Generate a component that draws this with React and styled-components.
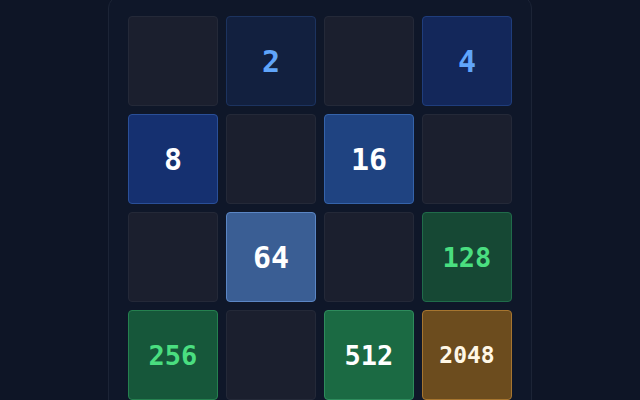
import React from 'react';
import styled, { createGlobalStyle } from 'styled-components';

const GlobalStyle = createGlobalStyle`
  * {
    margin: 0;
    padding: 0;
    box-sizing: border-box;
  }

  html, body {
    width: 100%;
    height: 100%;
    overflow: hidden;
    background-color: #0e1526;
    font-family: 'DejaVu Sans Mono', 'Liberation Mono', monospace;
  }
`;

// cores de cada peça (fundo, borda, texto)
const tileColors = {
  0: ['#1b1f2e', '#242938', 'transparent'],
  2: ['#12203f', '#1c335f', '#60a5fa'],
  4: ['#13275a', '#1f3d7c', '#60a5fa'],
  8: ['#153070', '#2a4f98', '#ffffff'],
  16: ['#1f4381', '#3563aa', '#ffffff'],
  64: ['#3a5e94', '#5b86c4', '#ffffff'],
  128: ['#164834', '#206b4a', '#4ade80'],
  256: ['#16573a', '#25804f', '#4ade80'],
  512: ['#1b6a43', '#2e8b5c', '#ffffff'],
  2048: ['#6c4c1e', '#a6752f', '#fff7e6'],
};

// tamanho da fonte conforme a quantidade de digitos
const fontSizes = { 1: 30, 2: 30, 3: 27, 4: 23 };

const Page = styled.main`
  display: flex;
  justify-content: center;
`;

const Board = styled.section`
  width: 424px;
  margin-top: -4px;
  padding: 19px 19px 24px;
  background-color: #0f1729;
  border: 1px solid #1c2436;
  border-radius: 12px;
`;

const Grid = styled.div`
  display: grid;
  grid-template-columns: repeat(4, 90px);
  grid-auto-rows: 90px;
  gap: 8px;
`;

const Tile = styled.div`
  display: flex;
  align-items: center;
  justify-content: center;
  border-radius: 4px;
  background-color: ${({ $value }) => tileColors[$value][0]};
  border: 1px solid ${({ $value }) => tileColors[$value][1]};
  color: ${({ $value }) => tileColors[$value][2]};
  font-size: ${({ $value }) => fontSizes[String($value).length]}px;
  font-weight: bold;
`;

const board = [
  [0, 2, 0, 4],
  [8, 0, 16, 0],
  [0, 64, 0, 128],
  [256, 0, 512, 2048],
];

export default function App() {
  return (
    <>
      <GlobalStyle />
      <Page>
        <Board>
          <Grid>
            {board.flat().map((value, i) => (
              <Tile key={i} $value={value}>
                {value > 0 ? value : ''}
              </Tile>
            ))}
          </Grid>
        </Board>
      </Page>
    </>
  );
}
